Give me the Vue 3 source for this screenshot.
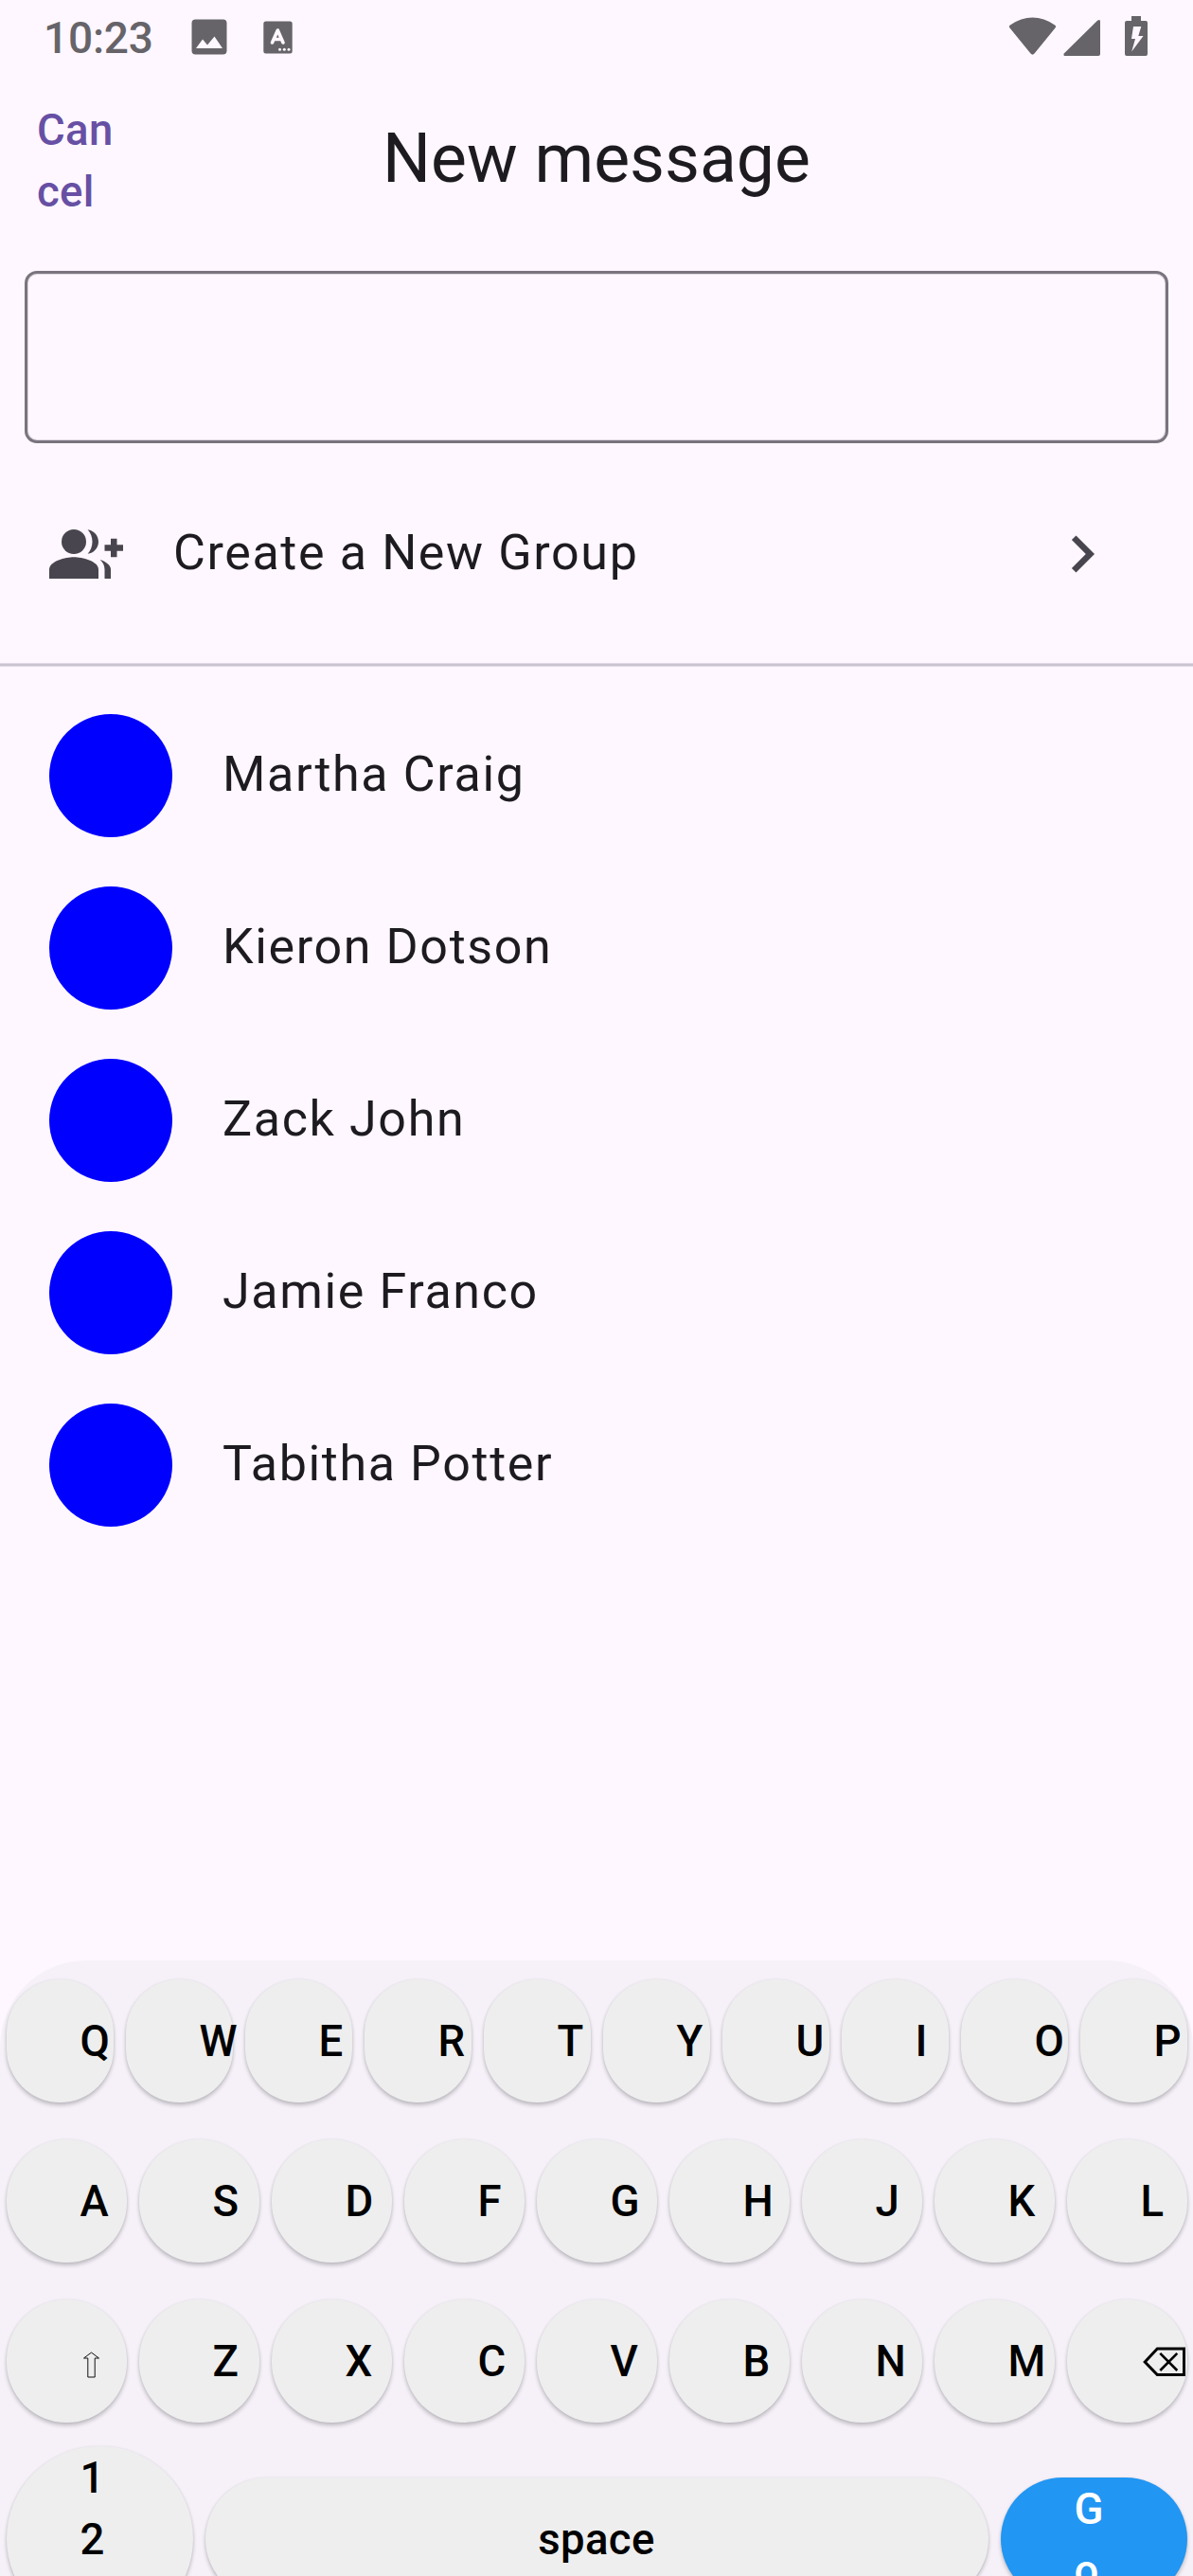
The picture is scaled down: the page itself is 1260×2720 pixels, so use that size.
<script setup>
const contacts = ['Martha Craig', 'Kieron Dotson', 'Zack John', 'Jamie Franco', 'Tabitha Potter']
const rows = [
  [...'QWERTYUIOP'],
  [...'ASDFGHJKL'],
  ['shift', ...'ZXCVBNM', 'delete'],
]
</script>

<template>
  <div class="screen">
    <header class="status">
      <span class="time">10:23</span>
      <svg class="photo" width="38" height="38" viewBox="0 0 38 38">
        <rect x=".5" y=".5" width="37" height="37" rx="4" fill="#666469" />
        <path d="M5 31 12 21.500l5 6 7.500-9L33 31z" fill="#fef7ff" />
      </svg>
      <svg class="lang" width="31" height="35" viewBox="0 0 31 35">
        <rect x=".3" y=".5" width="30.400" height="34" rx="2.500" fill="#666469" />
        <path d="M9.500 23 15.300 10 21 23M11.500 19.500h8" fill="none" stroke="#fef7ff" stroke-width="3.600" stroke-linecap="round" stroke-linejoin="round" />
        <g fill="#fef7ff"><circle cx="17.500" cy="30.300" r="1.500" /><circle cx="22.300" cy="30.300" r="1.500" /><circle cx="27" cy="30.300" r="1.500" /></g>
      </svg>
      <span class="spacer"></span>
      <svg class="system" width="150" height="46" viewBox="0 0 150 46" fill="#666469">
        <path d="M1.500 11.500Q0 9.800 1.500 8.700 25.500-7.500 49.500 8.700q1.500 1.100 0 2.800L27.500 38.600q-2 2.300-4 0z" />
        <path d="M94 3.800q3-2 3 .7v34.500q0 2-2 2H60.500q-3.300 0-1.500-2.800z" />
        <path d="M130 -1h10v5h5q2 0 2 2v33q0 2-2 2h-20q-2 0-2-2V6q0-2 2-2h5z" />
        <path d="M132 10h8.300l-3 10h5.200l-12.300 16.500 3.800-13.500h-4z" fill="#fef7ff" />
      </svg>
    </header>

    <nav class="bar">
      <button class="cancel">Can<br />cel</button>
      <h1>New message</h1>
    </nav>

    <div class="field"></div>

    <div class="group">
      <svg width="78" height="78" viewBox="0 0 24 24" fill="#49454f">
        <path d="M22 9V7h-2v2h-2v2h2v2h2v-2h2V9z" />
        <circle cx="8" cy="8" r="4" />
        <path d="M8 13c-2.670 0-8 1.340-8 4v3h16v-3c0-2.660-5.330-4-8-4z" />
        <path d="M12.510 4.050C13.430 5.110 14 6.490 14 8s-.57 2.890-1.490 3.950C14.470 11.700 16 10.040 16 8s-1.530-3.700-3.490-3.950zM16.530 13.830C17.420 14.660 18 15.700 18 17v3h2v-3c0-1.450-1.590-2.510-3.470-3.170z" />
      </svg>
      <span class="label">Create a New Group</span>
      <svg width="78" height="78" viewBox="0 0 24 24" fill="#49454f">
        <path d="M10 6 8.590 7.410 13.170 12l-4.580 4.590L10 18l6-6z" />
      </svg>
    </div>
    <div class="divider"></div>

    <ul class="contacts">
      <li v-for="name in contacts" :key="name">
        <span class="avatar"></span>
        <span class="label">{{ name }}</span>
      </li>
    </ul>

    <section class="keyboard">
      <div v-for="(row, i) in rows" :key="i" class="row">
        <div v-for="k in row" :key="k" class="key">
          <svg v-if="k === 'shift'" class="shift" width="19" height="28" viewBox="0 0 19 28">
            <path d="M9.500 1 17.500 7H13.200V27H5.800V7H1.500z" fill="none" stroke="#111" stroke-width="1" />
          </svg>
          <svg v-else-if="k === 'delete'" class="delete" width="46" height="32" viewBox="0 0 46 32" fill="none" stroke="#000">
            <path d="M2.200 16 15.300 2H43.500V29.500H15.300z" stroke-width="3" />
            <path d="M18.300 6.800 36.300 25M36.300 6.800 18.300 25" stroke-width="2.600" />
          </svg>
          <template v-else>{{ k }}</template>
        </div>
      </div>
      <div class="row last">
        <div class="key numeric">1<br />2</div>
        <div class="key space">space</div>
        <div class="key go">G<br />o</div>
      </div>
    </section>
  </div>
</template>

<style>
body { margin: 0; background: #fef7ff; }
</style>

<style scoped>
.screen {
  width: 1260px;
  height: 2720px;
  overflow: hidden;
  display: flex;
  flex-direction: column;
  background: #fef7ff;
  color: #1d1b20;
  font-family: Roboto, sans-serif;
}
svg { display: block; flex: none; overflow: visible; }
.status {
  height: 105px;
  flex: none;
  display: flex;
  align-items: flex-start;
  box-sizing: border-box;
  padding: 0 45px 0 46px;
}
.time {
  width: 156px;
  margin-top: 13px;
  font-size: 46px;
  line-height: 54px;
  font-weight: 500;
  letter-spacing: -.2px;
  color: #666469;
}
.photo { margin-top: 20px; }
.lang { margin: 22px 0 0 38px; }
.spacer { flex: 1; }
.system { margin-top: 18px; }
.bar {
  height: 181px;
  flex: none;
  display: grid;
  grid-template-columns: 182px 1fr 182px;
  align-items: start;
}
.cancel {
  padding: 0 0 0 39px;
  border: 0;
  background: none;
  text-align: left;
  font: 500 45.5px/65px Roboto, sans-serif;
  letter-spacing: .325px;
  color: #6750a4;
}
h1 {
  margin: 17px 0 0;
  text-align: center;
  font-size: 71.5px;
  line-height: 91px;
  font-weight: 400;
}
.field {
  height: 182px;
  flex: none;
  box-sizing: border-box;
  margin: 0 26px;
  border: 3px solid #79747e;
  border-radius: 13px;
  box-shadow: inset 0 0 0 1px #79747e40;
}
.group {
  height: 232px;
  flex: none;
  display: flex;
  align-items: center;
  box-sizing: border-box;
  padding: 2px 78px 0 52px;
}
.group .label { flex: 1; margin: -2px 0 0 53px; }
.label {
  font-size: 52px;
  line-height: 78px;
  letter-spacing: 1.625px;
}
.divider {
  height: 4px;
  flex: none;
  background: linear-gradient(#e0d9e5 1px, #cac4d0 1px 3px, #e0d9e5 3px);
}
.contacts {
  list-style: none;
  margin: 24px 0 0;
  padding: 0;
  flex: 1;
}
.contacts li {
  height: 182px;
  display: flex;
  align-items: center;
  gap: 53px;
  padding-left: 52px;
}
.contacts .label { margin-top: -3px; }
.avatar { width: 130px; height: 130px; border-radius: 50%; background: #00f; }
.keyboard {
  height: 650px;
  flex: none;
  background: #f6f1f9;
  border-radius: 91px 91px 0 0;
}
.row { display: flex; padding: 19.5px 0; }
.key {
  flex: 1 1 0;
  min-width: 0;
  height: 130px;
  box-sizing: border-box;
  margin: 0 6.5px;
  padding: 1px 0 0 78px;
  border-radius: 65px;
  background: #eee;
  box-shadow: 0 3px 4px #00000038, 0 0 3px #00000012;
  color: #000;
  font-size: 45.5px;
  font-weight: 500;
  line-height: 130px;
  letter-spacing: .325px;
  white-space: nowrap;
}
.shift { margin: 54px 0 0 2px; }
.delete { margin: 49px 0 0 2px; }
.last { align-items: center; padding: 6px 0 0; }
.last .key { line-height: 65px; }
.last .numeric { flex: none; width: 197px; height: 195px; border-radius: 98px; }
.last .space { padding: 1px 0 0; text-align: center; line-height: 130px; }
.last .go { flex: none; width: 197px; background: #2196f3; color: #fff; }
</style>
